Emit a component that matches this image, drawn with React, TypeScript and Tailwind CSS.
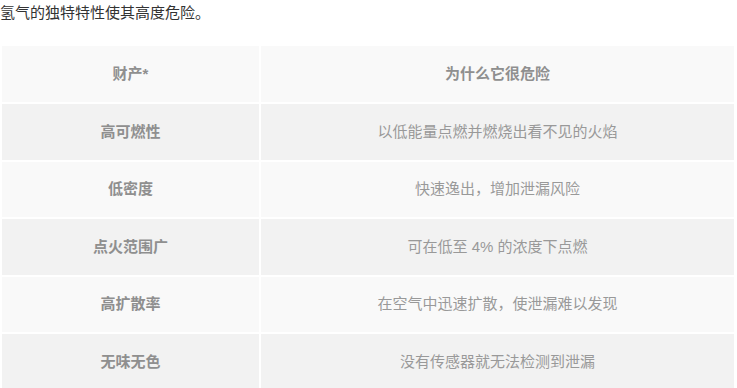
const rows = [
  { name: '高可燃性', why: '以低能量点燃并燃烧出看不见的火焰' },
  { name: '低密度', why: '快速逸出，增加泄漏风险' },
  { name: '点火范围广', why: '可在低至 4% 的浓度下点燃' },
  { name: '高扩散率', why: '在空气中迅速扩散，使泄漏难以发现' },
  { name: '无味无色', why: '没有传感器就无法检测到泄漏' },
];

export default function App() {
  return (
    <div className="w-[737px] h-[388px] overflow-hidden bg-white font-['Liberation_Sans','Noto_Sans_CJK_SC',sans-serif]">
      <p className="text-[15px] leading-[26px] text-[#333] mb-[18px]">氢气的独特特性使其高度危险。</p>
      <table className="w-[736px] border-separate border-spacing-[2px] text-[15px] text-[#999] text-center">
        <thead>
          <tr className="bg-[#f9f9f9]">
            <th className="w-[257px] h-[56px] font-bold text-[#8f8f8f]">财产*</th>
            <th className="h-[56px] font-bold text-[#8f8f8f]">为什么它很危险</th>
          </tr>
        </thead>
        <tbody>
          {rows.map((r, i) => (
            <tr key={r.name} className={i % 2 === 0 ? 'bg-[#f2f2f2]' : 'bg-[#f9f9f9]'}>
              <td className="h-[55.6px] font-bold text-[#8f8f8f]">{r.name}</td>
              <td className="h-[55.6px]">{r.why}</td>
            </tr>
          ))}
        </tbody>
      </table>
    </div>
  );
}
